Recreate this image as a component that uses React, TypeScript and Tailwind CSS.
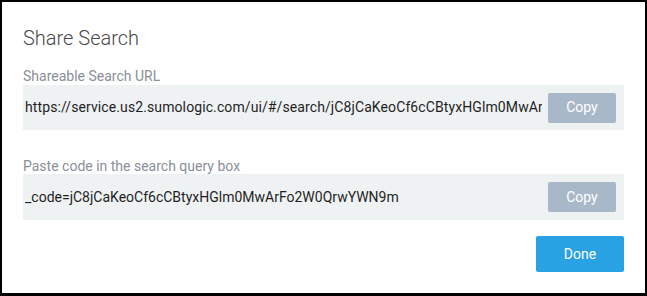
export default function App() {
  const url =
    "https://service.us2.sumologic.com/ui/#/search/jC8jCaKeoCf6cCBtyxHGlm0MwArFo2W0QrwYWN9m";
  const code = "_code=jC8jCaKeoCf6cCBtyxHGlm0MwArFo2W0QrwYWN9m";

  return (
    <div className="w-[647px] h-[296px] bg-white border-black border-t-2 border-l-2 border-r-2 border-b-[3px] px-[21px] pt-[24px] flex flex-col font-['Roboto',sans-serif]">
      <h1 className="text-[20px] leading-[25px] font-light text-[#4a4a4a]">Share Search</h1>

      <label className="mt-4 text-[14px] leading-[18px] text-[#8a9099]">Shareable Search URL</label>
      <div className="h-[45px] bg-[#eff2f3] flex items-center pl-[2px] pr-2">
        <div className="flex-1 min-w-0 overflow-hidden whitespace-nowrap text-[14px] tracking-[0.1px] text-[#1f1f1f] mr-[6px]">
          {url}
        </div>
        <button className="w-[68px] h-[30px] shrink-0 rounded-[2px] bg-[#a9b8c8] text-white text-[14px]">Copy</button>
      </div>

      <label className="mt-[28px] text-[14px] leading-[16px] text-[#8a9099]">Paste code in the search query box</label>
      <div className="h-[46px] bg-[#eff2f3] flex items-center pl-[2px] pr-2">
        <div className="flex-1 min-w-0 overflow-hidden whitespace-nowrap text-[14px] text-[#1f1f1f] mr-[6px]">
          {code}
        </div>
        <button className="w-[68px] h-[30px] shrink-0 rounded-[2px] bg-[#a9b8c8] text-white text-[14px]">Copy</button>
      </div>

      <div className="mt-4 flex justify-end">
        <button className="w-[88px] h-[36px] rounded-[2px] bg-[#29a2e3] text-white text-[14px]">Done</button>
      </div>
    </div>
  );
}
